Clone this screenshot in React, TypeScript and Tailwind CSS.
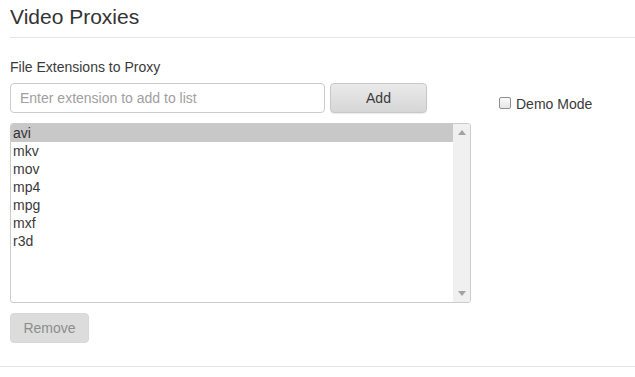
import React from 'react';

const extensions = ['avi', 'mkv', 'mov', 'mp4', 'mpg', 'mxf', 'r3d'];

export default function App() {
  return (
    <div
      className="w-[635px] h-[377px] bg-white text-[#333] overflow-hidden"
      style={{ fontFamily: '"Liberation Sans", Arial, sans-serif' }}
    >
      {/* Header */}
      <div className="ml-[10px] h-[38px] border-b border-[#e5e5e5] flex items-start pt-[5px]">
        <h1 className="text-[21px] leading-[24px] font-normal text-[#333]">Video Proxies</h1>
      </div>

      {/* Body */}
      <div className="flex h-[329px] border-b border-[#e5e5e5]">
        <div className="ml-[10px] w-[461px] flex flex-col">
          <label className="mt-[21px] text-[14px] leading-[16px] text-[#3a3a3a]">
            File Extensions to Proxy
          </label>
          <div className="mt-[8px] flex gap-[5px]">
            <input
              className="w-[315px] h-[30px] rounded-[4px] border border-[#ccc] px-[9px] text-[14px] text-[#555] placeholder:text-[#a0a0a0] outline-none"
              placeholder="Enter extension to add to list"
            />
            <button className="w-[97px] h-[30px] rounded-[4px] border border-[#c8c8c8] bg-gradient-to-b from-[#eaeaea] to-[#d6d6d6] text-[14px] text-[#3a3a3a] shadow-[0_1px_1px_rgba(0,0,0,0.08)]">
              Add
            </button>
          </div>
          <div className="mt-[10px] h-[180px] w-[461px] border border-[#ccc] rounded-[3px] flex overflow-hidden">
            <div className="flex-1 flex flex-col">
              {extensions.map((ext, i) => (
                <div
                  key={ext}
                  className={`h-[18px] leading-[18px] pl-[2px] text-[14px] ${
                    i === 0 ? 'bg-[#c8c8c8] text-[#333]' : 'text-[#3a3a3a]'
                  }`}
                >
                  {ext}
                </div>
              ))}
            </div>
            <div className="w-[17px] bg-[#f0f0f0] flex flex-col justify-between items-center py-[6px]">
              <svg width="8" height="5" viewBox="0 0 8 5">
                <path d="M0 5 L4 0 L8 5 Z" fill="#a3a3a3" />
              </svg>
              <svg width="8" height="5" viewBox="0 0 8 5">
                <path d="M0 0 L4 5 L8 0 Z" fill="#a3a3a3" />
              </svg>
            </div>
          </div>
          <div className="mt-[10px]">
            <button className="w-[79px] h-[30px] rounded-[4px] border border-[#d8d8d8] bg-[#dcdcdc] text-[14px] text-[#8c8c8c]">
              Remove
            </button>
          </div>
        </div>
        <div className="ml-[28px] mt-[58px] flex items-start gap-[5px]">
          <span className="mt-[1px] w-[12px] h-[12px] rounded-[2px] border border-[#8f8f8f] bg-gradient-to-b from-[#fafafa] to-[#e6e6e6]" />
          <span className="text-[14px] leading-[16px] text-[#3a3a3a]">Demo Mode</span>
        </div>
      </div>
    </div>
  );
}
